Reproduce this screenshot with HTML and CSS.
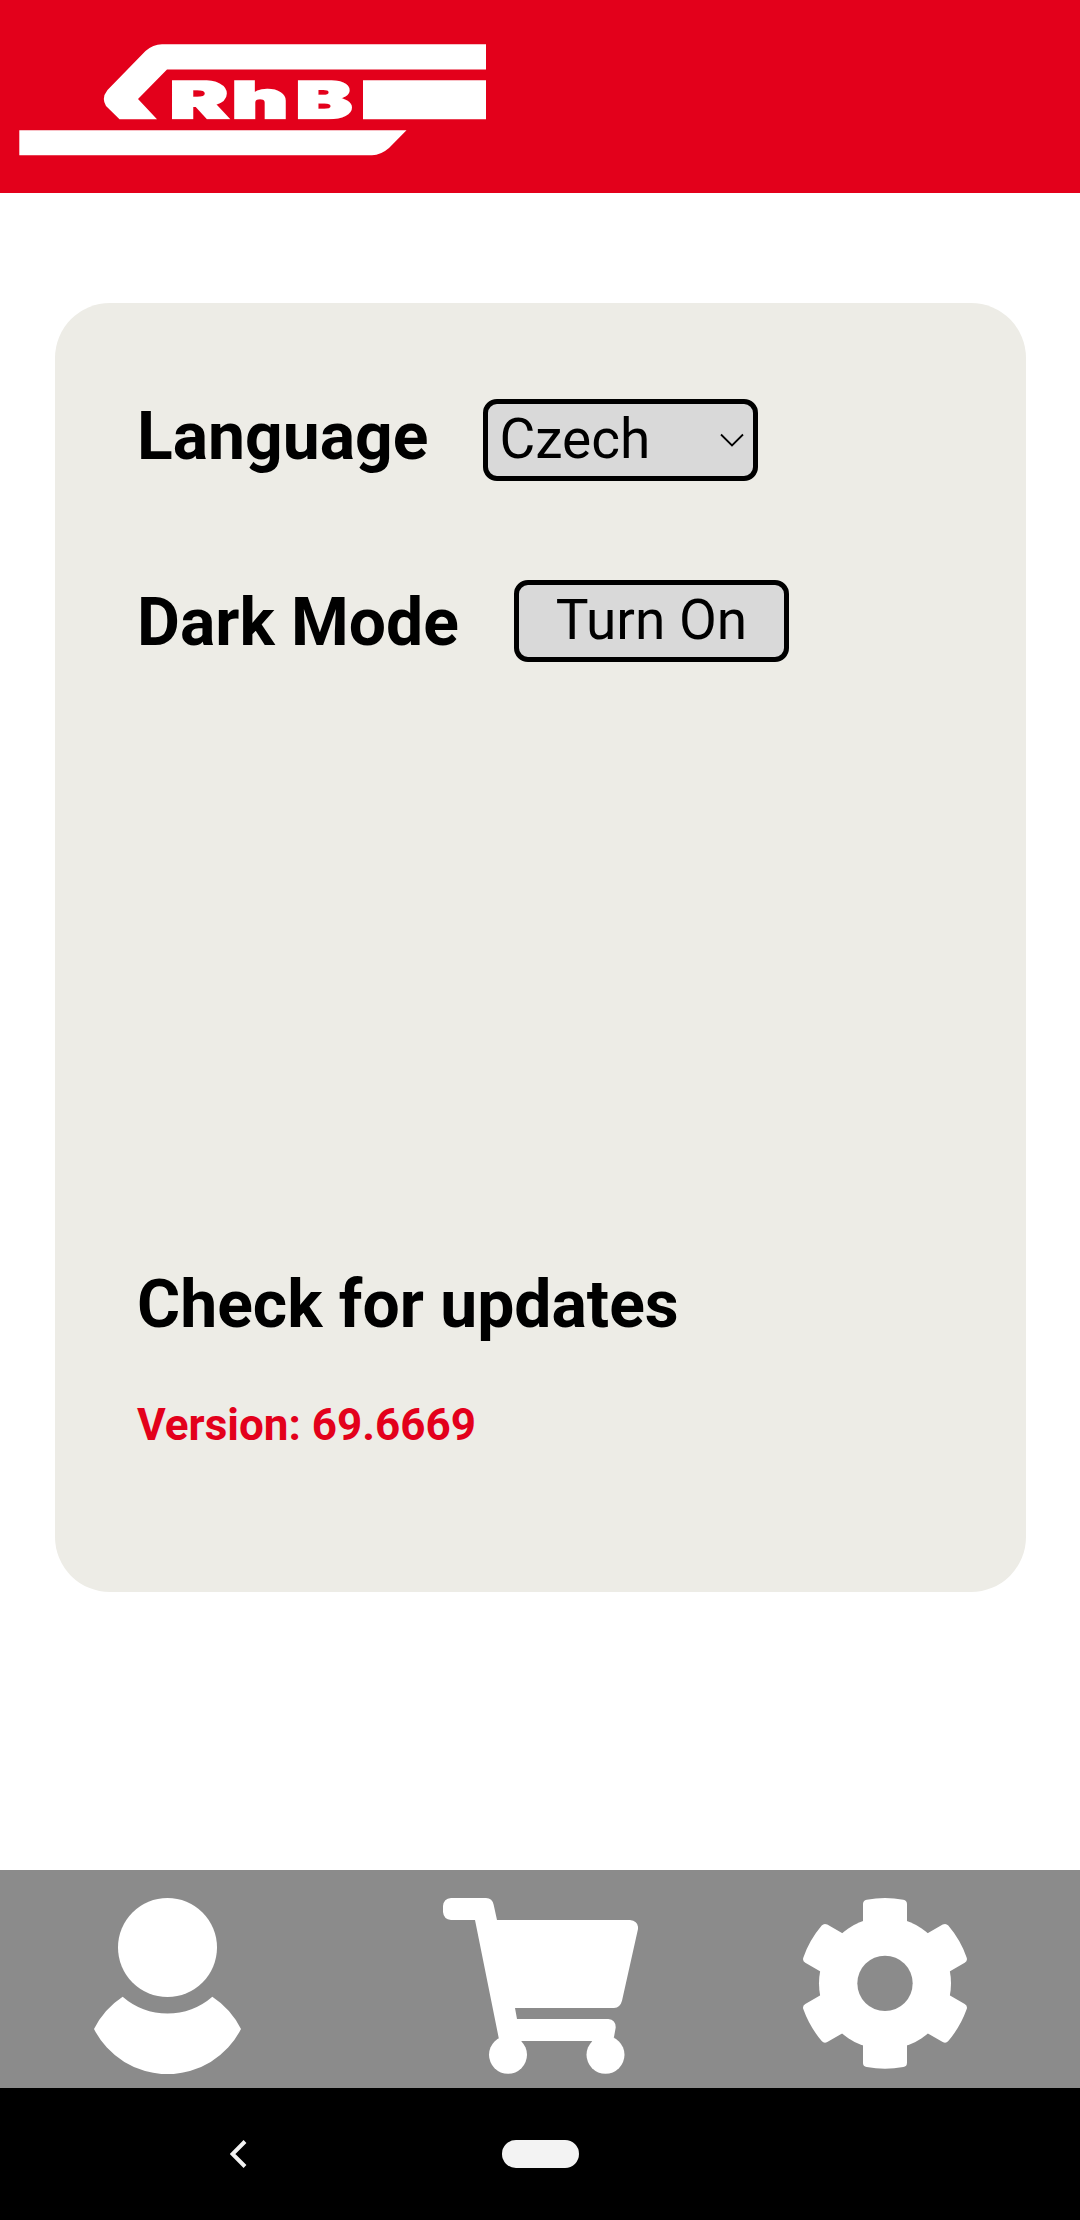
FILE: index.html
```html
<!DOCTYPE html>
<html lang="en">
<head>
<meta charset="utf-8">
<title>Settings</title>
<link rel="stylesheet" href="styles.css">
</head>
<body>
<header class="header">
  <svg class="logo" viewBox="19 44 468 112" role="img" aria-label="RhB">
    <clipPath id="letters"><rect x="165" y="80.2" width="192" height="39.2"/></clipPath>
    <path d="M486 44.3H162Q153 44.5 145.500 51L107.500 90Q101 98 106 106L119.500 119.300H157L138 99L167 69.500H486Z"/>
    <path d="M363 80.300H486V119.300H363ZM19.300 130.300H406.500L389 148Q381 155 372 155.300H19.300Z"/>
    <g class="logo-text" clip-path="url(#letters)">
      <text x="170" y="118.300" textLength="58" lengthAdjust="spacingAndGlyphs">R</text>
      <text x="232" y="118.300" textLength="56" lengthAdjust="spacingAndGlyphs">h</text>
      <text x="296" y="118.300" textLength="56" lengthAdjust="spacingAndGlyphs">B</text>
    </g>
  </svg>
</header>
<main class="main">
  <section class="card">
    <div class="row">
      <h2 class="label label-language">Language</h2>
      <button class="control select">
        <span>Czech</span>
        <svg class="chevron" viewBox="0 0 24 14"><path d="M1 1.500L12 12.500L23 1.500"/></svg>
      </button>
    </div>
    <div class="row row-dark">
      <h2 class="label label-dark">Dark Mode</h2>
      <button class="control">Turn On</button>
    </div>
    <h2 class="label updates">Check for updates</h2>
    <p class="version">Version: 69.6669</p>
  </section>
</main>
<nav class="tabs">
  <svg class="tab-user" viewBox="102 114 441 528">
    <circle cx="322.500" cy="262.500" r="148.500"/>
    <path d="M188 410A204 204 0 0 0 457 410A247 247 0 0 1 543 507A247 247 0 0 1 102 507A247 247 0 0 1 188 410Z"/>
  </svg>
  <svg class="tab-cart" viewBox="69 114 585 528">
    <path d="M93 114H198Q217 115 221 134L231 180H630Q656 183 654 207L606 422Q601 442 582 444H285L291 477H565Q588 480 587 503L582 531L556 584L515 543H305L264 584L236 533L165 180H93Q71 178 69 156V138Q71 116 93 114Z"/>
    <circle cx="264" cy="584.500" r="57"/>
    <circle cx="556.500" cy="584.500" r="57"/>
  </svg>
  <svg class="tab-gear" viewBox="68 114 492 513">
    <defs><path id="tooth" d="M248 370V132Q248 121 259 119Q314 109 369 119Q380 121 380 132V370Z"/></defs>
    <circle cx="314" cy="370" r="198"/>
    <use href="#tooth"/>
    <use href="#tooth" transform="rotate(60 314 370)"/>
    <use href="#tooth" transform="rotate(120 314 370)"/>
    <use href="#tooth" transform="rotate(180 314 370)"/>
    <use href="#tooth" transform="rotate(240 314 370)"/>
    <use href="#tooth" transform="rotate(300 314 370)"/>
    <circle class="gear-hole" cx="314" cy="370" r="83"/>
  </svg>
</nav>
<footer class="system-bar">
  <svg class="back" viewBox="0 0 17 28"><path d="M15 1.500L2.500 14L15 26.500"/></svg>
  <span class="home"></span>
</footer>
</body>
</html>
```
FILE: styles.css
```css
* {
  box-sizing: border-box;
}

body {
  margin: 0;
  height: 2220px;
  display: flex;
  flex-direction: column;
  background: #fff;
  color: #000;
  font-family: Roboto, sans-serif;
}

.header {
  height: 193px;
  padding: 44px 19px;
  background: #e3001b;
}

.logo {
  display: block;
  width: 468px;
  height: 112px;
  fill: #fff;
}

.logo-text {
  font-family: Inter, sans-serif;
  font-weight: 900;
  font-size: 51px;
  stroke: #fff;
  stroke-width: 2.4;
}

.main {
  flex: 1;
  padding: 110px 54px 0 55px;
}

.card {
  height: 1289px;
  padding: 96px 82px 0;
  border-radius: 55px;
  background: #edece6;
}

.row {
  display: flex;
  align-items: center;
  gap: 55px;
  height: 82px;
}

.row-dark {
  margin-top: 99px;
}

.label {
  margin: 0;
  font-size: 66px;
  font-weight: 700;
  line-height: 78px;
  white-space: nowrap;
}

.label-language {
  padding-bottom: 7px;
}

.label-dark {
  padding-top: 3px;
}

.control {
  display: flex;
  align-items: center;
  justify-content: center;
  width: 275px;
  height: 82px;
  padding: 0 0 3px;
  border: 5px solid #000;
  border-radius: 14px;
  background: #d9d9d9;
  color: #000;
  font: 400 55px/64px Roboto, sans-serif;
}

.select {
  justify-content: space-between;
  padding: 0 9px 3px 11px;
}

.chevron {
  width: 24px;
  height: 14px;
  margin-top: 3px;
  fill: none;
  stroke: #000;
  stroke-width: 1.8;
}

.updates {
  margin-top: 604px;
}

.version {
  margin: 55px 0 0;
  color: #e3001b;
  font-size: 44px;
  font-weight: 700;
  line-height: 52px;
}

.tabs {
  display: flex;
  align-items: flex-start;
  height: 218px;
  padding: 28px 0 0 94px;
  background: #8b8b8b;
  fill: #fff;
}

.tab-user {
  width: 147px;
  height: 176px;
}

.tab-cart {
  width: 195px;
  height: 176px;
  margin-left: 202px;
}

.tab-gear {
  width: 164px;
  height: 171px;
  margin-left: 165px;
}

.gear-hole {
  fill: #8b8b8b;
}

.system-bar {
  display: flex;
  align-items: center;
  height: 132px;
  padding: 0 0 0 230px;
  background: #000;
}

.back {
  width: 17px;
  height: 28px;
  fill: none;
  stroke: #f3f3f3;
  stroke-width: 4;
}

.home {
  width: 77px;
  height: 28px;
  margin-left: 255px;
  border-radius: 14px;
  background: #f3f3f3;
}
```
